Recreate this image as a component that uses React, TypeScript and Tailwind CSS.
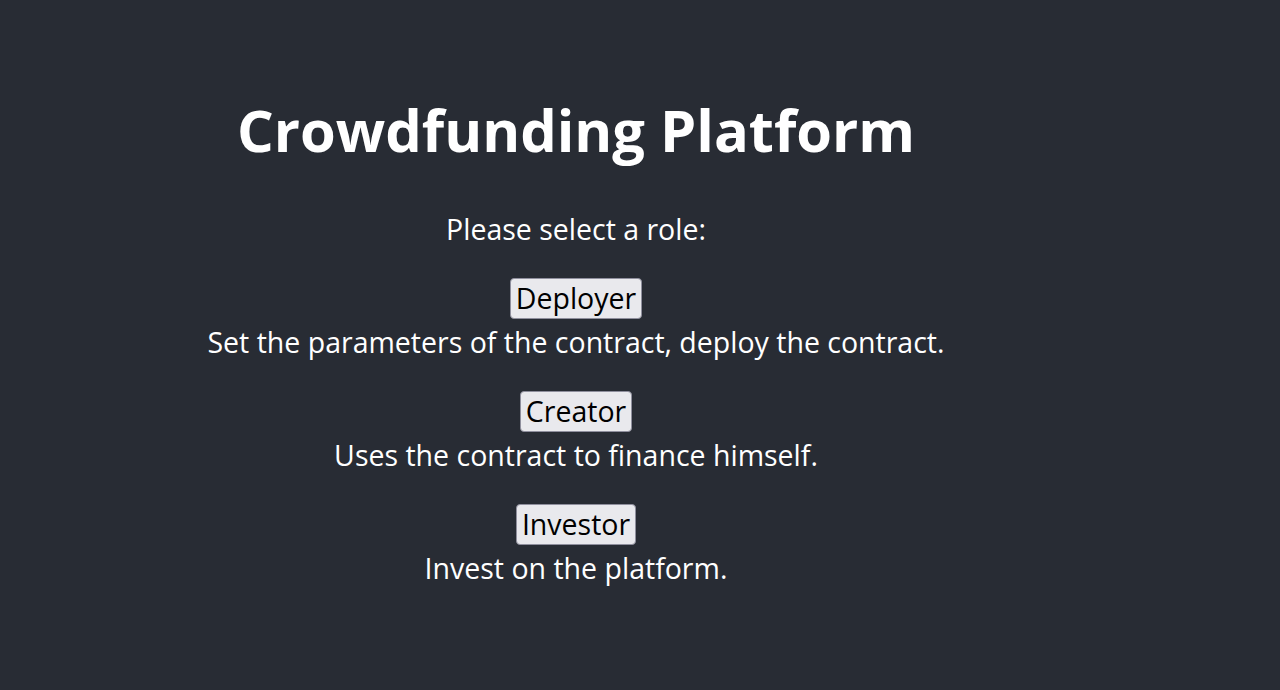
export default function App() {
  const roles = [
    { name: "Deployer", desc: "Set the parameters of the contract, deploy the contract." },
    { name: "Creator", desc: "Uses the contract to finance himself." },
    { name: "Investor", desc: "Invest on the platform." },
  ];
  return (
    <div className="min-h-[690px] bg-[#282c34] text-white" style={{ fontFamily: '"Open Sans", "Noto Sans", sans-serif' }}>
      <div className="w-[1152px] flex flex-col items-center pt-[96px]">
        <h1 className="text-[57.8px] font-bold leading-[68px]">Crowdfunding Platform</h1>
        <p className="mt-[45px] text-[28.5px] leading-[40px]">Please select a role:</p>
        <div className="flex flex-col items-center mt-[29px] gap-[26px]">
          {roles.map((r) => (
            <div key={r.name} className="flex flex-col items-center">
              <button className="bg-[#e9e9ed] text-black text-[28.5px] h-[41px] leading-[39px] px-[5px] border border-[#8f8f9d] rounded-[4px]">
                {r.name}
              </button>
              <div className="text-[28.5px] leading-[46px]">{r.desc}</div>
            </div>
          ))}
        </div>
      </div>
    </div>
  );
}
